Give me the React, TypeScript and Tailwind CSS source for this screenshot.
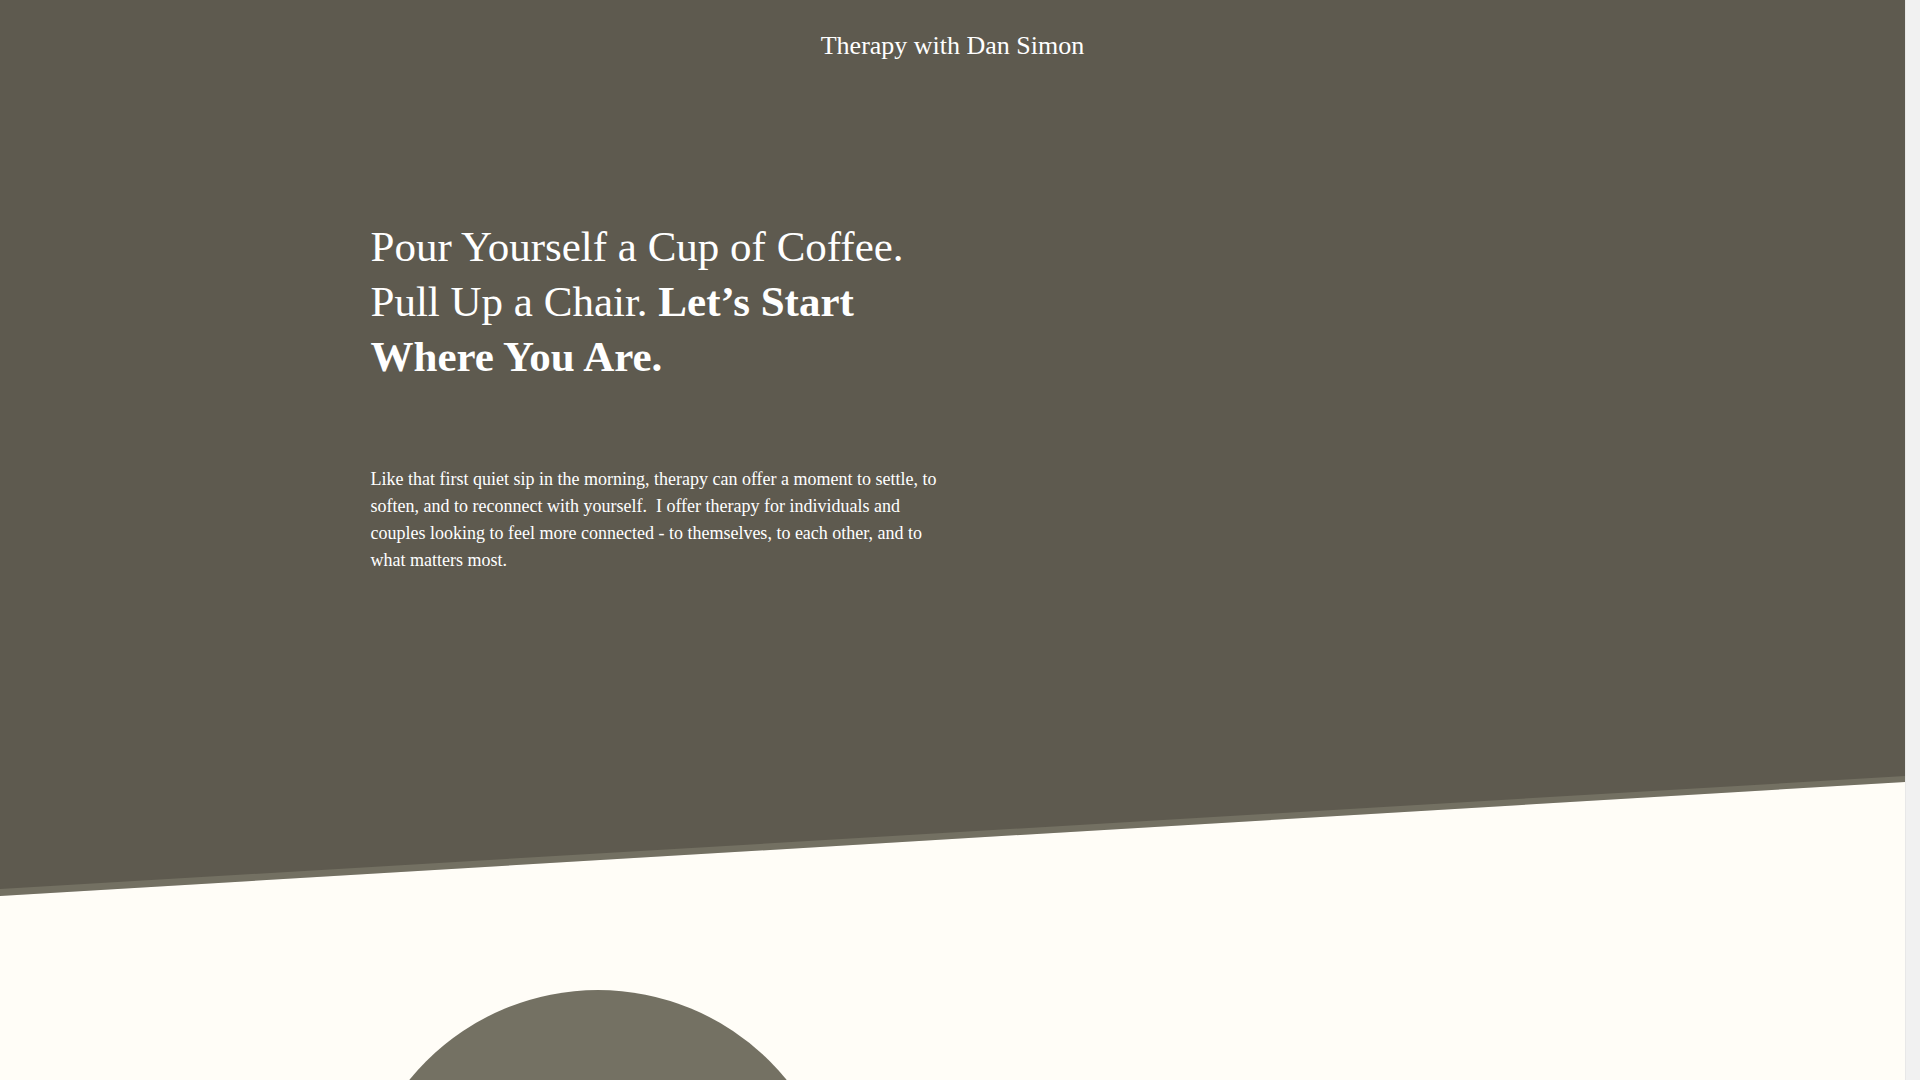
export default function App() {
  return (
    <div className="flex min-h-screen font-['Liberation_Serif','Times_New_Roman',serif]">
      <main className="min-w-0 flex-1 bg-[#fffdf7]">
        {/* Hero */}
        <section className="relative h-[896px] bg-[#5e5a4f] text-white">
          <header className="pt-[31px] text-center">
            <a href="#" className="text-[26px] leading-[30px] text-white">
              Therapy with Dan Simon
            </a>
          </header>

          <div className="mx-auto w-[1164px] pt-[158px]">
            <div className="w-[580px]">
              <h1 className="text-[43px] leading-[55px] font-normal">
                Pour Yourself a Cup of Coffee. Pull Up a Chair.{' '}
                <strong className="font-bold">Let’s Start Where You Are.</strong>
              </h1>
              <p className="mt-[82px] text-[18px] leading-[27px]">
                Like that first quiet sip in the morning, therapy can offer a moment to settle, to soften, and to
                reconnect with yourself.{'\u00a0'} I offer therapy for individuals and couples looking to feel more
                connected - to themselves, to each other, and to what matters most.
              </p>
            </div>
          </div>

          {/* slanted divider */}
          <svg
            className="absolute bottom-0 left-0 h-[120px] w-full"
            viewBox="0 0 1905 120"
            preserveAspectRatio="none"
          >
            <polygon points="0,113 1905,0 1905,6 0,120" fill="#737062" />
            <polygon points="0,120 1905,6 1905,120" fill="#fffdf7" />
          </svg>
        </section>

        {/* About */}
        <section className="pt-[94px] pb-24">
          <div className="mx-auto w-[1196px]">
            <div className="h-[486px] w-[486px] rounded-full bg-[#747163]" />
          </div>
        </section>
      </main>

      {/* scrollbar track */}
      <div className="w-[15px] shrink-0 border-l border-[#e8e8e8] bg-[#f1f1f1]" />
    </div>
  )
}
